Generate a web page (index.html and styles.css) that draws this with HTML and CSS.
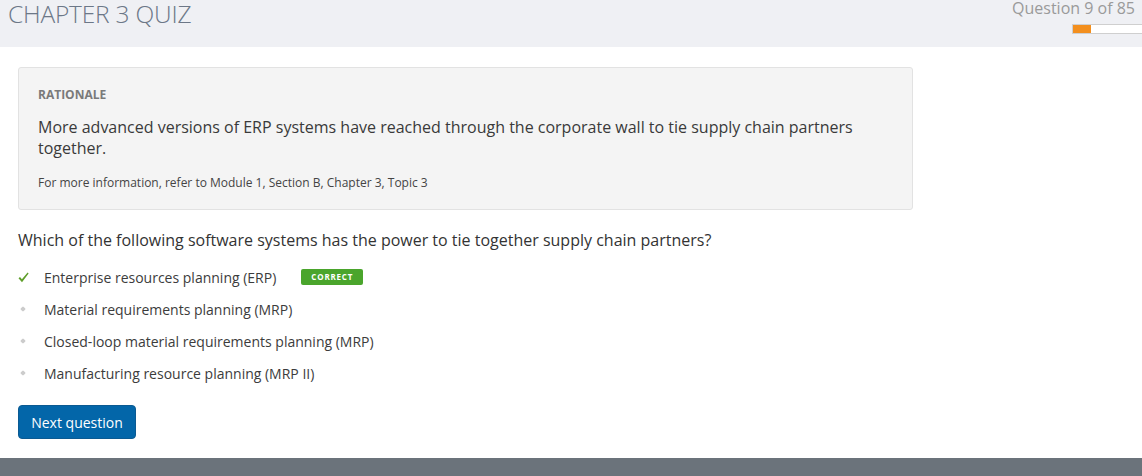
FILE: index.html
```html
<!DOCTYPE html>
<html>
<head>
<meta charset="utf-8">
<link rel="stylesheet" href="styles.css">
</head>
<body>
<header class="top">
  <h1 class="title">CHAPTER 3 QUIZ</h1>
  <div class="progress">
    <div class="count">Question 9 of 85</div>
    <div class="bar"><div class="fill" style="width:18px"></div></div>
  </div>
</header>
<main class="main">
  <section class="rationale">
    <div class="r-label">RATIONALE</div>
    <p class="r-text">More advanced versions of ERP systems have reached through the corporate wall to tie supply chain partners together.</p>
    <p class="r-ref">For more information, refer to Module 1, Section B, Chapter 3, Topic 3</p>
  </section>
  <p class="question">Which of the following software systems has the power to tie together supply chain partners?</p>
  <ul class="options">
    <li class="opt">
      <span class="mark"><svg width="11" height="11" viewBox="0 0 11 11"><path d="M0.5 6.2 L2 4.9 L3.9 7.2 L9.6 0.6 L10.6 1.6 L4 10.3 Z" fill="#5e9e2a"/></svg></span>
      <span class="label">Enterprise resources planning (ERP)</span>
      <span class="badge">CORRECT</span>
    </li>
    <li class="opt"><span class="mark"><span class="dot"></span></span><span class="label">Material requirements planning (MRP)</span></li>
    <li class="opt"><span class="mark"><span class="dot"></span></span><span class="label">Closed-loop material requirements planning (MRP)</span></li>
    <li class="opt"><span class="mark"><span class="dot"></span></span><span class="label">Manufacturing resource planning (MRP II)</span></li>
  </ul>
  <button class="next">Next question</button>
</main>
<footer class="foot"></footer>
</body>
</html>
```

FILE: styles.css
```css
html, body {
  margin: 0;
  padding: 0;
}
body {
  font-family: "Open Sans", "Noto Sans", sans-serif;
  color: #333;
  background: #fff;
  width: 1142px;
  height: 476px;
  overflow: hidden;
  display: flex;
  flex-direction: column;
}
.top {
  height: 47px;
  background: #eff0f4;
  display: flex;
  justify-content: space-between;
  align-items: flex-start;
  flex: none;
}
.title {
  margin: 0 0 0 8px;
  font-weight: 300;
  font-size: 24.5px;
  line-height: 28.6px;
  color: #6c7787;
  letter-spacing: -0.2px;
}
.progress {
  display: flex;
  flex-direction: column;
  align-items: flex-end;
}
.count {
  font-size: 16px;
  line-height: 16px;
  margin-right: 7px;
  color: #9a9a9a;
  font-weight: 400;
}
.bar {
  margin-top: 8px;
  width: 69px;
  height: 8px;
  border: 1px solid #cfcfcf;
  border-right: none;
  background: #fff;
}
.fill {
  height: 100%;
  background: #f38f1e;
}
.main {
  flex: 1;
  padding: 20px 18px 0;
}
.rationale {
  width: 855px;
  background: #f4f4f4;
  border: 1px solid #e2e2e2;
  border-radius: 3px;
  padding: 19px 19px 18px;
}
.r-label {
  font-size: 12px;
  font-weight: 700;
  color: #7a7a7a;
  line-height: 16px;
}
.r-text {
  margin: 14px 0 0;
  font-size: 16px;
  line-height: 21px;
  color: #3a3a3a;
}
.r-ref {
  margin: 16px 0 0;
  font-size: 12px;
  line-height: 16px;
  color: #444;
}
.question {
  margin: 19px 0 0;
  font-size: 16px;
  line-height: 22px;
  color: #333;
}
.options {
  list-style: none;
  margin: 10px 0 0;
  padding: 0;
}
.opt {
  display: flex;
  align-items: center;
  height: 32px;
  font-size: 14px;
  color: #3c3c3c;
}
.mark {
  width: 26px;
  display: flex;
  align-items: center;
}
.dot {
  width: 4px;
  height: 4px;
  margin-left: 3px;
  background: #ccc;
  border-radius: 1px;
  transform: rotate(45deg);
}
.badge {
  margin-left: 25px;
  background: #4aa52c;
  color: #fff;
  font-size: 8px;
  font-weight: 700;
  letter-spacing: 0.8px;
  line-height: 16px;
  padding: 0 10px;
  border-radius: 2px;
  margin-top: -1px;
}
.next {
  margin-top: 16px;
  background: #0366a9;
  color: #fff;
  font-family: "Open Sans", sans-serif;
  font-size: 14px;
  border: 1px solid #0b5a92;
  border-radius: 4px;
  height: 34px;
  width: 118px;
  padding: 0;
  font-weight: 500;
}
.foot {
  height: 18px;
  background: #6b737b;
  flex: none;
}
```
